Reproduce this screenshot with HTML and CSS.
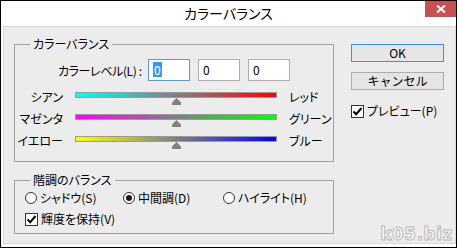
FILE: index.html
```html
<!DOCTYPE html>
<html lang="ja">
  <head>
    <meta charset="UTF-8" />
    <title>カラーバランス</title>
    <link rel="stylesheet" href="styles.css">
  </head>
  <body>
    <div class="window">
      <div class="titlebar">
        <span></span>
        <div class="title">カラーバランス</div>
        <div class="close">
          <svg width="10" height="8" viewBox="0 0 10 8">
            <path d="M1 0.5 L9 7.5 M9 0.5 L1 7.5" stroke="#fff" stroke-width="2" fill="none" />
          </svg>
        </div>
      </div>

      <div class="frame">
        <div class="left">
          <fieldset class="group group-color">
            <legend>カラーバランス</legend>
            <div class="level-row">
              <span class="level-label">カラーレベル(L) :</span>
              <div class="field focused"><span class="sel">0</span></div>
              <div class="field">0</div>
              <div class="field">0</div>
            </div>

            <div class="sliders">
              <div class="slider-row">
                <span class="side-left">シアン</span>
                <div class="slider">
                  <div class="bar bar-cyan"></div>
                  <svg class="thumb" width="9" height="7" viewBox="0 0 9 7">
                    <path d="M4.5 0 L8 3.5 Q9 4.5 9 5.5 L9 7 L0 7 L0 5.5 Q0 4.5 1 3.5 Z" fill="#808080" />
                  </svg>
                </div>
                <span class="side-right">レッド</span>
              </div>
              <div class="slider-row">
                <span class="side-left">マゼンタ</span>
                <div class="slider">
                  <div class="bar bar-magenta"></div>
                  <svg class="thumb" width="9" height="7" viewBox="0 0 9 7">
                    <path d="M4.5 0 L8 3.5 Q9 4.5 9 5.5 L9 7 L0 7 L0 5.5 Q0 4.5 1 3.5 Z" fill="#808080" />
                  </svg>
                </div>
                <span class="side-right">グリーン</span>
              </div>
              <div class="slider-row">
                <span class="side-left">イエロー</span>
                <div class="slider">
                  <div class="bar bar-yellow"></div>
                  <svg class="thumb" width="9" height="7" viewBox="0 0 9 7">
                    <path d="M4.5 0 L8 3.5 Q9 4.5 9 5.5 L9 7 L0 7 L0 5.5 Q0 4.5 1 3.5 Z" fill="#808080" />
                  </svg>
                </div>
                <span class="side-right">ブルー</span>
              </div>
            </div>
          </fieldset>

          <fieldset class="group group-tone">
            <legend>階調のバランス</legend>
            <div class="radio-row">
              <div class="option"><span class="radio"></span>シャドウ(S)</div>
              <div class="option"><span class="radio checked"></span>中間調(D)</div>
              <div class="option"><span class="radio"></span>ハイライト(H)</div>
            </div>
            <div class="check-row">
              <span class="checkbox">
                <svg width="11" height="11" viewBox="0 0 11 11">
                  <path d="M1.5 5.5 L4.2 8.2 L9.5 2" stroke="#000" stroke-width="2" fill="none" />
                </svg>
              </span>
              輝度を保持(V)
            </div>
          </fieldset>
        </div>

        <div class="buttons">
          <button class="btn btn-default">OK</button>
          <button class="btn">キャンセル</button>
          <div class="check-row preview">
            <span class="checkbox">
              <svg width="11" height="11" viewBox="0 0 11 11">
                <path d="M1.5 5.5 L4.2 8.2 L9.5 2" stroke="#000" stroke-width="2" fill="none" />
              </svg>
            </span>
            プレビュー(P)
          </div>
        </div>

        <div class="watermark">k05.biz</div>
      </div>
    </div>
  </body>
</html>
```

FILE: styles.css
```css
body {
  margin: 0;
  background: #fff;
  font-family: "Noto Sans CJK JP", "Noto Sans", sans-serif;
  font-feature-settings: "palt";
  font-size: 12px;
  color: #000;
}
.window {
  width: 457px;
  height: 248px;
  box-sizing: border-box;
  border: 1px solid #000;
  background: #fff;
  display: flex;
  flex-direction: column;
}
.titlebar {
  height: 25px;
  display: grid;
  grid-template-columns: 1fr auto 1fr;
}
.title {
  font-size: 14px;
  line-height: 25px;
}
.close {
  justify-self: end;
  width: 31px;
  height: 16px;
  background: #c75050;
  display: flex;
  align-items: center;
  justify-content: center;
}
.frame {
  position: relative;
  flex: 1;
  margin: 0 0 3px 2px;
  border: 1px solid #d9d9d9;
  background: #ececec;
  display: flex;
}
.left {
  padding: 9px 0 0 10px;
}
.group {
  width: 320px;
  box-sizing: border-box;
  margin: 0;
  padding: 0 0 6px 0;
  border: 1px solid #a0a0a0;
  min-width: 0;
}
.group legend {
  margin-left: 15px;
  padding: 0 3px;
  line-height: 16px;
}
.level-row {
  display: flex;
  align-items: center;
  gap: 8px;
  margin-top: 7px;
  padding-left: 43px;
}
.level-label {
  flex: none;
  width: 82px;
  white-space: nowrap;
  letter-spacing: -0.4px;
}
.field {
  width: 42px;
  height: 22px;
  box-sizing: border-box;
  border: 1px solid #adadad;
  background: #fff;
  padding-left: 4px;
  line-height: 20px;
}
.field.focused {
  border-color: #5b9bd5;
}
.sel {
  background: #3399ff;
  color: #fff;
  display: inline-block;
  line-height: 15px;
  padding: 0 1px;
}
.sliders {
  margin-top: 8px;
}
.slider-row {
  display: flex;
  height: 22px;
  line-height: 16px;
}
.side-left {
  width: 48px;
  text-align: right;
  margin-right: 12px;
}
.side-right {
  margin-left: 12px;
}
.slider {
  width: 202px;
  padding-top: 3px;
}
.bar {
  height: 6px;
  box-sizing: border-box;
  border: 1px solid #9a9a9a;
}
.bar-cyan {
  background: linear-gradient(to right, #00ffff, #808080, #ff0000);
}
.bar-magenta {
  background: linear-gradient(to right, #ff00ff, #808080, #00ff00);
}
.bar-yellow {
  background: linear-gradient(to right, #ffff00, #808080, #0000ff);
}
.thumb {
  display: block;
  margin: 0 auto;
}
.group-tone {
  margin-top: 10px;
}
.radio-row {
  display: grid;
  grid-template-columns: 98px 100px auto;
  margin-top: 2px;
  padding-left: 10px;
  line-height: 16px;
}
.option {
  display: flex;
  align-items: center;
  gap: 3px;
}
.radio {
  width: 12px;
  height: 12px;
  box-sizing: border-box;
  border: 1px solid #333;
  border-radius: 50%;
  background: #fff;
  display: flex;
  align-items: center;
  justify-content: center;
}
.radio.checked::after {
  content: "";
  width: 6px;
  height: 6px;
  border-radius: 50%;
  background: #1a1a1a;
}
.check-row {
  display: flex;
  align-items: center;
  gap: 3px;
  margin-top: 5px;
  padding-left: 10px;
  line-height: 16px;
}
.checkbox {
  width: 13px;
  height: 13px;
  box-sizing: border-box;
  border: 1px solid #333;
  background: #fff;
  display: flex;
  align-items: center;
  justify-content: center;
}
.buttons {
  margin-left: 17px;
  padding-top: 17px;
  display: flex;
  flex-direction: column;
}
.btn {
  width: 93px;
  height: 18px;
  padding: 0;
  border: 1px solid #adadad;
  background: #e5e5e5;
  font-family: inherit;
  font-size: 12px;
  line-height: 16px;
  color: #000;
}
.btn + .btn {
  margin-top: 10px;
}
.btn-default {
  border-color: #3c92e6;
}
.preview {
  margin-top: 13px;
  padding-left: 0;
}
.watermark {
  position: absolute;
  right: 2px;
  bottom: -1px;
  font-family: "DejaVu Sans", sans-serif;
  font-weight: bold;
  font-size: 17px;
  letter-spacing: 0.5px;
  color: #f4f4f4;
  -webkit-text-stroke: 1px #bcbcbc;
}
```
